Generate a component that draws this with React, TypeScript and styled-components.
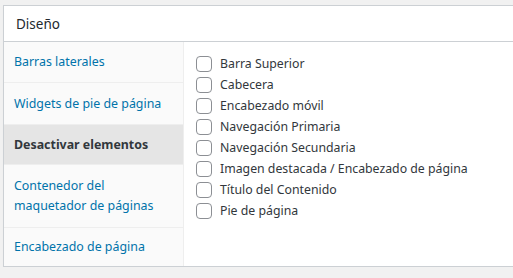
import React from "react";
import styled, { createGlobalStyle } from "styled-components";

const Global = createGlobalStyle`
  html, body { margin: 0; padding: 0; background: #f1f1f1; }
  body { font-family: "Noto Sans", "Open Sans", sans-serif; }
`;

const Panel = styled.div`
  margin: 5px 0 0 3px;
  width: 530px;
  background: #fff;
  border: 1px solid #ccd0d4;
  box-shadow: 0 1px 1px rgba(0,0,0,0.04);
`;

const Header = styled.div`
  height: 35px;
  display: flex;
  align-items: center;
  padding-left: 12px;
  border-bottom: 1px solid #ccd0d4;
  font-size: 13.5px;
  color: #23282d;
`;

const Body = styled.div`
  display: flex;
`;

const Tabs = styled.ul`
  list-style: none;
  margin: 0;
  padding: 0;
  width: 179px;
  background: #fafafa;
  border-right: 1px solid #eee;
`;

const Tab = styled.li<{ $active?: boolean; $h: number }>`
  height: ${(p) => p.$h}px;
  display: flex;
  align-items: center;
  padding: 0 10px;
  border-bottom: 1px solid #eee;
  font-size: 12.4px;
  line-height: 20px;
  color: ${(p) => (p.$active ? "#32373c" : "#0073aa")};
  font-weight: ${(p) => (p.$active ? 700 : 400)};
  background: ${(p) => (p.$active ? "#e5e5e5" : "transparent")};
  &:last-child { border-bottom: none; }
`;

const Options = styled.div`
  flex: 1;
  padding: 11px 12px;
  display: flex;
  flex-direction: column;
`;

const Row = styled.label`
  display: flex;
  align-items: center;
  height: 21px;
  gap: 8px;
  font-size: 12.3px;
  color: #32373c;
`;

const Box = styled.span`
  width: 14px;
  height: 14px;
  border: 1px solid #8c8f94;
  border-radius: 4px;
  background: #fff;
  flex: none;
`;

const tabs: { label: React.ReactNode; h: number; active?: boolean }[] = [
  { label: "Barras laterales", h: 40 },
  { label: "Widgets de pie de página", h: 41 },
  { label: "Desactivar elementos", h: 39, active: true },
  { label: <>Contenedor del<br />maquetador de páginas</>, h: 62 },
  { label: "Encabezado de página", h: 38 },
];

const options = [
  "Barra Superior",
  "Cabecera",
  "Encabezado móvil",
  "Navegación Primaria",
  "Navegación Secundaria",
  "Imagen destacada / Encabezado de página",
  "Título del Contenido",
  "Pie de página",
];

export default function App() {
  return (
    <>
      <Global />
      <Panel>
        <Header>Diseño</Header>
        <Body>
          <Tabs>
            {tabs.map((t, i) => (
              <Tab key={i} $h={t.h} $active={t.active}>
                <span>{t.label}</span>
              </Tab>
            ))}
          </Tabs>
          <Options>
            {options.map((o) => (
              <Row key={o}>
                <Box />
                {o}
              </Row>
            ))}
          </Options>
        </Body>
      </Panel>
    </>
  );
}
